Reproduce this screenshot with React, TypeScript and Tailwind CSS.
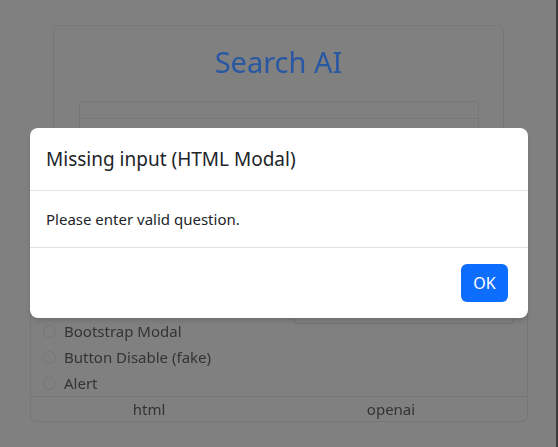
import React from "react";

const font = { fontFamily: '"Noto Sans", "Open Sans", sans-serif' };

const options = ["Bootstrap Modal", "Button Disable (fake)", "Alert"];

function Background() {
  return (
    <div className="h-full flex flex-col blur-[0.4px]">
      {/* search card */}
      <div className="mt-[25px] ml-[53px] w-[451px] h-[270px] border border-[#777777] rounded-md flex flex-col items-center">
        <div className="mt-[18px] text-[29px] leading-[36px] text-[#2857a3]">Search AI</div>
        <div className="mt-[21px] w-[400px] h-[120px] border border-[#777777] rounded flex flex-col">
          <div className="h-[17px] border-b border-[#777777]" />
        </div>
      </div>

      {/* options + result table */}
      <div className="mt-[-2px] ml-[30px] w-[498px] border-x border-b border-[#777777] rounded-b-md flex flex-col">
        <div className="grid grid-cols-[262px_1fr]">
          <div className="flex flex-col pt-[25px] pl-[12px]">
            {options.map((o) => (
              <div key={o} className="h-[26px] flex items-center gap-[8px]">
                <span className="w-[13px] h-[13px] rounded-full border border-[#767676]" />
                <span className="text-[15px] text-[#333333]">{o}</span>
              </div>
            ))}
          </div>
          <div className="pr-[12px]">
            <div className="h-[31px] border-x border-b border-[#727272] rounded-b-md" />
          </div>
        </div>
        <div className="flex h-[25px] items-center border-t border-[#777777] text-[15px] text-[#333333]">
          <div className="w-[236px] text-center">html</div>
          <div className="w-[248px] text-center">openai</div>
        </div>
      </div>
    </div>
  );
}

export default function App() {
  return (
    <div
      className="relative w-[558px] h-[447px] bg-[#808080] overflow-hidden border-r-2 border-[#3c3c3c]"
      style={font}
    >
      <Background />
      <div className="absolute inset-0 flex items-center justify-center pl-[2px] pb-[2px]">
        <div className="w-[498px] bg-white rounded-lg shadow-md flex flex-col">
          <div className="h-[63px] px-4 flex items-center border-b border-[#dee2e6]">
            <h5 className="text-[19px] leading-[30px] text-[#212529]">Missing input (HTML Modal)</h5>
          </div>
          <div className="p-4 text-[15px] leading-[24px] text-[#212529] border-b border-[#dee2e6]">
            Please enter valid question.
          </div>
          <div className="flex justify-end px-[20px] py-[16px]">
            <button className="h-[38px] w-[47px] rounded-md bg-[#0d6efd] text-white text-[16px]">OK</button>
          </div>
        </div>
      </div>
    </div>
  );
}
